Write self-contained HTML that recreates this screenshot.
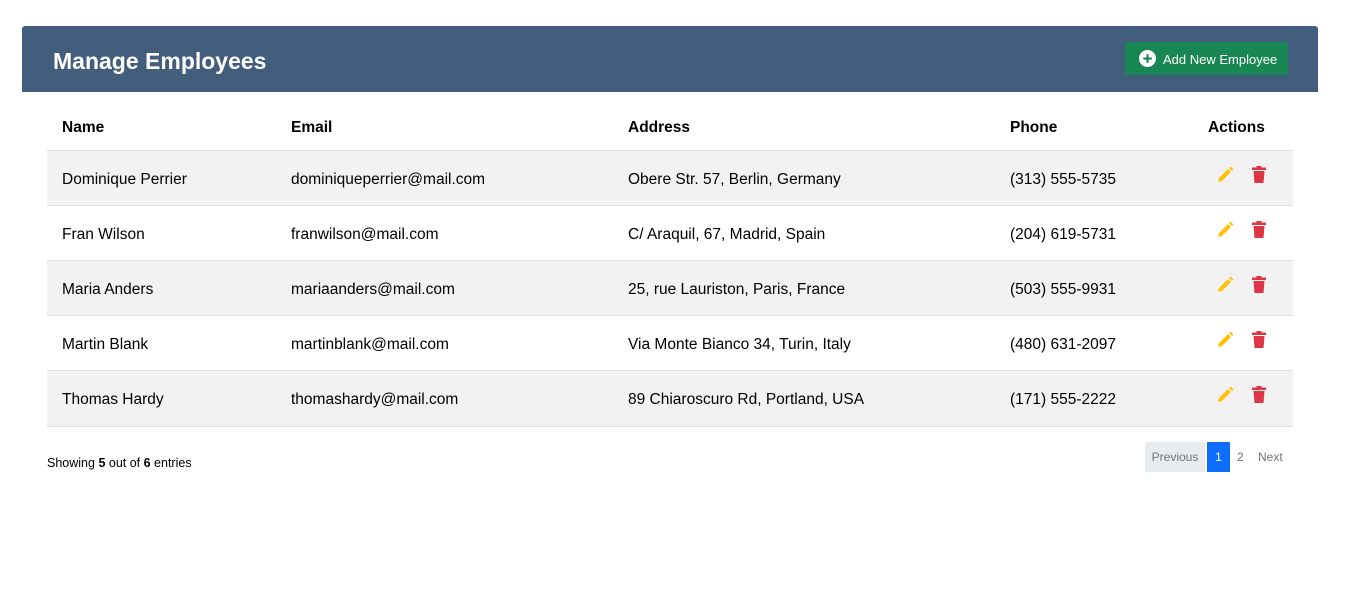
<!DOCTYPE html><html><head><style>
body{margin:0;background:#fff;font-family:"Liberation Sans",sans-serif;color:#000;width:1364px;height:608px;overflow:hidden;position:relative}
.hdr{position:absolute;left:22px;top:26px;width:1296px;height:66px;background:#435d7d;border-radius:3px 3px 0 0}
.hdr h2{position:absolute;left:31px;top:22px;margin:0;color:#fff;font-size:23px;font-weight:bold}
.btn{position:absolute;left:1103px;top:16px;width:163px;height:33px;background:#198754;border-radius:2px;color:#fff;font-size:13px;line-height:35px}
.btn span{position:absolute;left:38px}
.btn svg{position:absolute;left:14px;top:8px}
.row{position:absolute;left:47px;width:1246px;height:55px;border-top:1px solid #dee2e6;font-size:15.5px}
.row div{position:absolute;top:20px}
.th div{font-weight:bold;top:21px!important}
.g{background:#f2f2f2}
.c1{left:15px}.c2{left:244px}.c3{left:581px}.c4{left:963px}.c5{left:1161px}
.ic{position:absolute}
.foot{position:absolute;left:47px;top:456px;font-size:12.5px}
.pg{position:absolute;top:442px;height:30px;line-height:30px;font-size:12px;color:#6c757d}
</style></head><body>
<div class="hdr"><h2>Manage Employees</h2>
<div class="btn"><svg width="17" height="17" viewBox="0 0 16 16"><circle cx="8" cy="8" r="8" fill="#fff"/><path d="M8 4v8M4 8h8" stroke="#198754" stroke-width="2"/></svg><span>Add New Employee</span></div></div>
<div class="row th" style="top:98px;height:52px;border:none"><div class="c1">Name</div><div class="c2">Email</div><div class="c3">Address</div><div class="c4">Phone</div><div class="c5">Actions</div></div>
<div class="row g" style="top:150px"><div class="c1">Dominique Perrier</div><div class="c2">dominiqueperrier@mail.com</div><div class="c3">Obere Str. 57, Berlin, Germany</div><div class="c4">(313) 555-5735</div></div>
<div class="row" style="top:205px"><div class="c1">Fran Wilson</div><div class="c2">franwilson@mail.com</div><div class="c3">C/ Araquil, 67, Madrid, Spain</div><div class="c4">(204) 619-5731</div></div>
<div class="row g" style="top:260px"><div class="c1">Maria Anders</div><div class="c2">mariaanders@mail.com</div><div class="c3">25, rue Lauriston, Paris, France</div><div class="c4">(503) 555-9931</div></div>
<div class="row" style="top:315px"><div class="c1">Martin Blank</div><div class="c2">martinblank@mail.com</div><div class="c3">Via Monte Bianco 34, Turin, Italy</div><div class="c4">(480) 631-2097</div></div>
<div class="row g" style="top:370px;height:55px;border-bottom:1px solid #dee2e6"><div class="c1">Thomas Hardy</div><div class="c2">thomashardy@mail.com</div><div class="c3">89 Chiaroscuro Rd, Portland, USA</div><div class="c4">(171) 555-2222</div></div>
<div id="icons"></div>
<script>
var h='';[166,221,276,331,386].forEach(function(y){
h+='<svg class="ic" style="left:1216px;top:'+y+'px" width="18" height="18" viewBox="0 0 18 18"><path d="M2 16l1-4 9-9 3 3-9 9z" fill="#ffc107"/><path d="M13 2l1.5-1.5 3 3L16 5z" fill="#ffc107"/></svg>';
h+='<svg class="ic" style="left:1251px;top:'+y+'px" width="16" height="18" viewBox="0 0 16 18"><rect x="1" y="1.5" width="14" height="2.5" fill="#dc3545"/><rect x="5.5" y="0" width="5" height="2" fill="#dc3545"/><path d="M2.5 5h11l-1 12h-9z" fill="#dc3545"/></svg>';});
document.getElementById('icons').innerHTML=h;
</script>
<div class="foot">Showing <b>5</b> out of <b>6</b> entries</div>
<div class="pg" style="left:1145px;width:60px;background:#e9ecef;text-align:center;border-radius:2px">Previous</div>
<div class="pg" style="left:1207px;width:23px;background:#0d6efd;color:#fff;text-align:center">1</div>
<div class="pg" style="left:1237px">2</div>
<div class="pg" style="left:1258px">Next</div>
</body></html>
